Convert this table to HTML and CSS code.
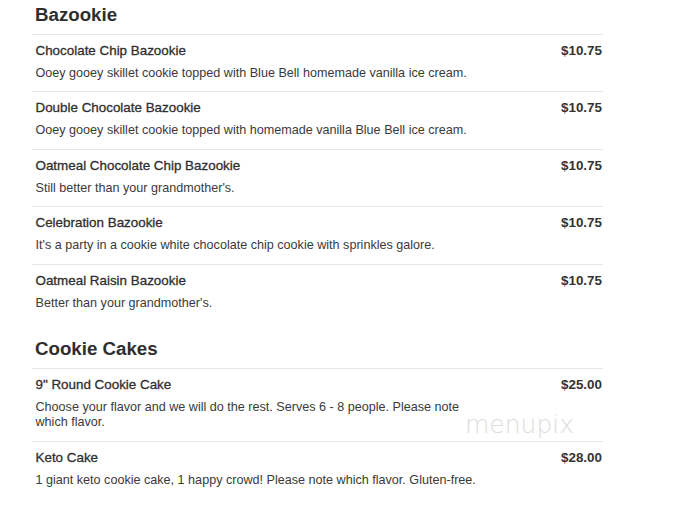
FILE: index.html
```html
<!DOCTYPE html>
<html>
<head>
<meta charset="utf-8">
<link rel="stylesheet" href="styles.css">
</head>
<body>
<div class="menu">
  <section class="section">
    <h2 class="section-title">Bazookie</h2>
    <div class="item">
      <div class="item-head"><span class="item-name">Chocolate Chip Bazookie</span><span class="item-price">$10.75</span></div>
      <div class="item-desc">Ooey gooey skillet cookie topped with Blue Bell homemade vanilla ice cream.</div>
    </div>
    <div class="item">
      <div class="item-head"><span class="item-name">Double Chocolate Bazookie</span><span class="item-price">$10.75</span></div>
      <div class="item-desc">Ooey gooey skillet cookie topped with homemade vanilla Blue Bell ice cream.</div>
    </div>
    <div class="item">
      <div class="item-head"><span class="item-name">Oatmeal Chocolate Chip Bazookie</span><span class="item-price">$10.75</span></div>
      <div class="item-desc">Still better than your grandmother's.</div>
    </div>
    <div class="item">
      <div class="item-head"><span class="item-name">Celebration Bazookie</span><span class="item-price">$10.75</span></div>
      <div class="item-desc">It's a party in a cookie white chocolate chip cookie with sprinkles galore.</div>
    </div>
    <div class="item">
      <div class="item-head"><span class="item-name">Oatmeal Raisin Bazookie</span><span class="item-price">$10.75</span></div>
      <div class="item-desc">Better than your grandmother's.</div>
    </div>
  </section>
  <section class="section">
    <h2 class="section-title">Cookie Cakes</h2>
    <div class="item">
      <div class="item-head"><span class="item-name">9" Round Cookie Cake</span><span class="item-price">$25.00</span></div>
      <div class="item-desc narrow">Choose your flavor and we will do the rest. Serves 6 - 8 people. Please note which flavor.</div>
    </div>
    <div class="item">
      <div class="item-head"><span class="item-name">Keto Cake</span><span class="item-price">$28.00</span></div>
      <div class="item-desc">1 giant keto cookie cake, 1 happy crowd! Please note which flavor. Gluten-free.</div>
    </div>
  </section>
  <div class="watermark">menupix</div>
</div>
</body>
</html>
```

FILE: styles.css
```css
html, body {
  margin: 0;
  padding: 0;
  background: #ffffff;
}
body {
  font-family: "Liberation Sans", Arial, sans-serif;
  color: #333333;
}
.menu {
  position: relative;
  width: 571px;
  margin-left: 32px;
  padding-top: 3.5px;
}
.section + .section {
  margin-top: 16.5px;
}
.section-title {
  margin: 0 0 8px 0;
  padding-left: 3px;
  font-size: 18.7px;
  line-height: 22px;
  font-weight: bold;
  color: #2e2e2e;
}
.item {
  border-top: 1px solid #e6e6e6;
  padding: 7px 1px 10.1px 3.5px;
}
.item-head {
  display: flex;
  justify-content: space-between;
  align-items: baseline;
  line-height: 18px;
}
.item-name {
  font-size: 13.4px;
  color: #2f2f2f;
  -webkit-text-stroke: 0.3px #2f2f2f;
}
.item-price {
  font-size: 13.4px;
  font-weight: bold;
  color: #333333;
}
.item-desc {
  margin-top: 6px;
  font-size: 12.6px;
  line-height: 15.5px;
  color: #3a3a3a;
}
.item-desc.narrow {
  max-width: 440px;
}
.watermark {
  position: absolute;
  left: 433px;
  top: 410px;
  font-family: "DejaVu Sans", sans-serif;
  font-weight: 200;
  font-size: 25px;
  letter-spacing: 0;
  color: #dcdcdc;
}
```
